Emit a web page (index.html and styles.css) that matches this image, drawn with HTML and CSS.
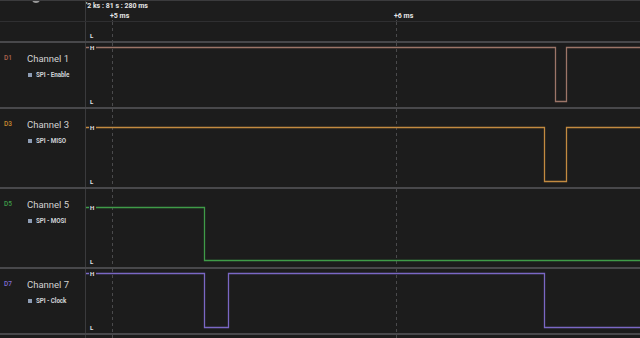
FILE: index.html
```html
<!DOCTYPE html>
<html lang="en">
<head>
    <meta charset="UTF-8">
    <title>Logic - SPI capture</title>
    <link rel="stylesheet" href="styles.css">
</head>
<body>
    <div class="app">
        <!-- Time ruler -->
        <div class="ruler">
            <div class="side"><span class="knob"></span></div>
            <svg class="canvas" width="554" height="20" viewBox="0 0 554 20">
                <text class="stamp" x="0" y="6.5">'2 ks : 81 s : 280 ms</text>
                <text class="tick" x="24" y="17">+5 ms</text>
                <text class="tick" x="308" y="17">+6 ms</text>
                <line class="grid" x1="26.5" y1="19" x2="26.5" y2="20"/>
                <line class="grid" x1="310.5" y1="19" x2="310.5" y2="20"/>
            </svg>
        </div>

        <!-- Channel above (cut off) -->
        <div class="row row-cut">
            <div class="side"></div>
            <svg class="canvas" width="554" height="19" viewBox="0 0 554 19">
                <line class="grid" x1="26.5" y1="0" x2="26.5" y2="19"/>
                <line class="grid" x1="310.5" y1="0" x2="310.5" y2="19"/>
                <text class="lvl" x="4" y="15.5">L</text>
            </svg>
        </div>

        <div class="row row-short">
            <div class="side">
                <div class="label"><span class="dn d1">D1</span><span class="name">Channel 1</span></div>
                <div class="sub"><i class="swatch"></i>SPI - Enable</div>
            </div>
            <svg class="canvas" width="554" height="64" viewBox="0 0 554 64">
                <line class="grid" x1="26.5" y1="0" x2="26.5" y2="64"/>
                <line class="grid" x1="310.5" y1="0" x2="310.5" y2="64"/>
                <path class="sig c1" d="M0 4.5 H469.5 V58.5 H480.5 V4.5 H554"/>
                <rect class="mask" x="3" y="1" width="7" height="7"/>
                <text class="lvl" x="4" y="6.7">H</text>
                <text class="lvl" x="4" y="60.7">L</text>
            </svg>
        </div>

        <div class="row row-tall">
            <div class="side">
                <div class="label"><span class="dn d3">D3</span><span class="name">Channel 3</span></div>
                <div class="sub"><i class="swatch"></i>SPI - MISO</div>
            </div>
            <svg class="canvas" width="554" height="78" viewBox="0 0 554 78">
                <line class="grid" x1="26.5" y1="0" x2="26.5" y2="78"/>
                <line class="grid" x1="310.5" y1="0" x2="310.5" y2="78"/>
                <path class="sig c3" d="M0 18.5 H458.5 V72.5 H480.5 V18.5 H554"/>
                <rect class="mask" x="3" y="15" width="7" height="7"/>
                <text class="lvl" x="4" y="20.7">H</text>
                <text class="lvl" x="4" y="74.7">L</text>
            </svg>
        </div>

        <div class="row row-tall">
            <div class="side">
                <div class="label"><span class="dn d5">D5</span><span class="name">Channel 5</span></div>
                <div class="sub"><i class="swatch"></i>SPI - MOSI</div>
            </div>
            <svg class="canvas" width="554" height="78" viewBox="0 0 554 78">
                <line class="grid" x1="26.5" y1="0" x2="26.5" y2="78"/>
                <line class="grid" x1="310.5" y1="0" x2="310.5" y2="78"/>
                <path class="sig c5" d="M0 18.5 H118.5 V71.5 H554"/>
                <rect class="mask" x="3" y="15" width="7" height="7"/>
                <text class="lvl" x="4" y="20.7">H</text>
                <text class="lvl" x="4" y="74.7">L</text>
            </svg>
        </div>

        <div class="row row-short">
            <div class="side">
                <div class="label"><span class="dn d7">D7</span><span class="name">Channel 7</span></div>
                <div class="sub"><i class="swatch"></i>SPI - Clock</div>
            </div>
            <svg class="canvas" width="554" height="64" viewBox="0 0 554 64">
                <line class="grid" x1="26.5" y1="0" x2="26.5" y2="64"/>
                <line class="grid" x1="310.5" y1="0" x2="310.5" y2="64"/>
                <path class="sig c7" d="M0 4.5 H118.5 V58.5 H142.5 V4.5 H458.5 V58.5 H554"/>
                <rect class="mask" x="3" y="1" width="7" height="7"/>
                <text class="lvl" x="4" y="6.7">H</text>
                <text class="lvl" x="4" y="60.7">L</text>
            </svg>
        </div>

        <!-- Channel below (cut off) -->
        <div class="row row-end">
            <div class="side"></div>
            <svg class="canvas" width="554" height="3" viewBox="0 0 554 3">
                <line class="grid" x1="26.5" y1="0" x2="26.5" y2="3"/>
                <line class="grid" x1="310.5" y1="0" x2="310.5" y2="3"/>
                <text class="lvl" x="4" y="6.5">H</text>
            </svg>
        </div>
    </div>
</body>
</html>
```

FILE: styles.css
```css
body {
    margin: 0;
    padding: 0;
    background-color: #1c1c1c;
    font-family: Roboto, "Liberation Sans", sans-serif;
    overflow: hidden;
}
.app {
    width: 640px;
    height: 338px;
    display: flex;
    flex-direction: column;
    overflow: hidden;
}
.ruler, .row {
    display: flex;
    flex-shrink: 0;
}
.side {
    width: 85px;
    flex-shrink: 0;
    border-right: 1px solid #3a3a3c;
    box-sizing: border-box;
    width: 86px;
}
.canvas {
    display: block;
    overflow: visible;
}

/* Ruler on top */
.ruler {
    height: 22px;
    border-top: 1px solid #3b3b3d;
    border-bottom: 1px solid #2f2f31;
    box-sizing: border-box;
    background: linear-gradient(90deg, #151515 0, #1d1d1d 20px, #1d1d1d 100%);
}
.ruler .side {
    background-color: #1c1c1c;
    position: relative;
    overflow: hidden;
}
.knob {
    position: absolute;
    left: 32px;
    top: -6px;
    width: 8px;
    height: 8px;
    border-radius: 50%;
    background-color: #9a9a9a;
}
.stamp, .tick {
    font-size: 7px;
    font-weight: 700;
    fill: #e6e6e6;
}

/* Channel rows */
.row {
    border-bottom: 2px solid #48484b;
}
.row-cut { height: 19px; }
.row-short { height: 64px; }
.row-tall { height: 78px; }
.row-end { height: 3px; border-bottom: none; }

.row .side {
    padding-top: 9px;
}
.label {
    display: flex;
    align-items: center;
    height: 12px;
    padding-left: 4px;
}
.dn {
    width: 23px;
    font-size: 6.5px;
    font-weight: 500;
}
.d1 { color: #b0644f; }
.d3 { color: #c98a2f; }
.d5 { color: #3e9d49; }
.d7 { color: #7f6bd2; }
.name {
    font-size: 9.5px;
    color: #d2d2d2;
}
.sub {
    display: flex;
    align-items: center;
    height: 8px;
    margin-top: 7px;
    padding-left: 28px;
    font-size: 6.3px;
    font-weight: 700;
    color: #cfd2d6;
    letter-spacing: -0.1px;
}
.swatch {
    width: 4px;
    height: 4px;
    margin-right: 4px;
    background-color: #8d9cb4;
}

/* Waveforms */
.grid {
    stroke: #4a4a4c;
    stroke-width: 1;
    stroke-dasharray: 3 3;
}
.sig {
    fill: none;
    stroke-width: 1.3;
}
.c1 { stroke: #9c7568; }
.c3 { stroke: #c38a40; }
.c5 { stroke: #3f9b48; }
.c7 { stroke: #7a67c4; }
.mask {
    fill: #1c1c1c;
}
.lvl {
    font-size: 6px;
    font-weight: 700;
    fill: #e2e2e2;
}
```
